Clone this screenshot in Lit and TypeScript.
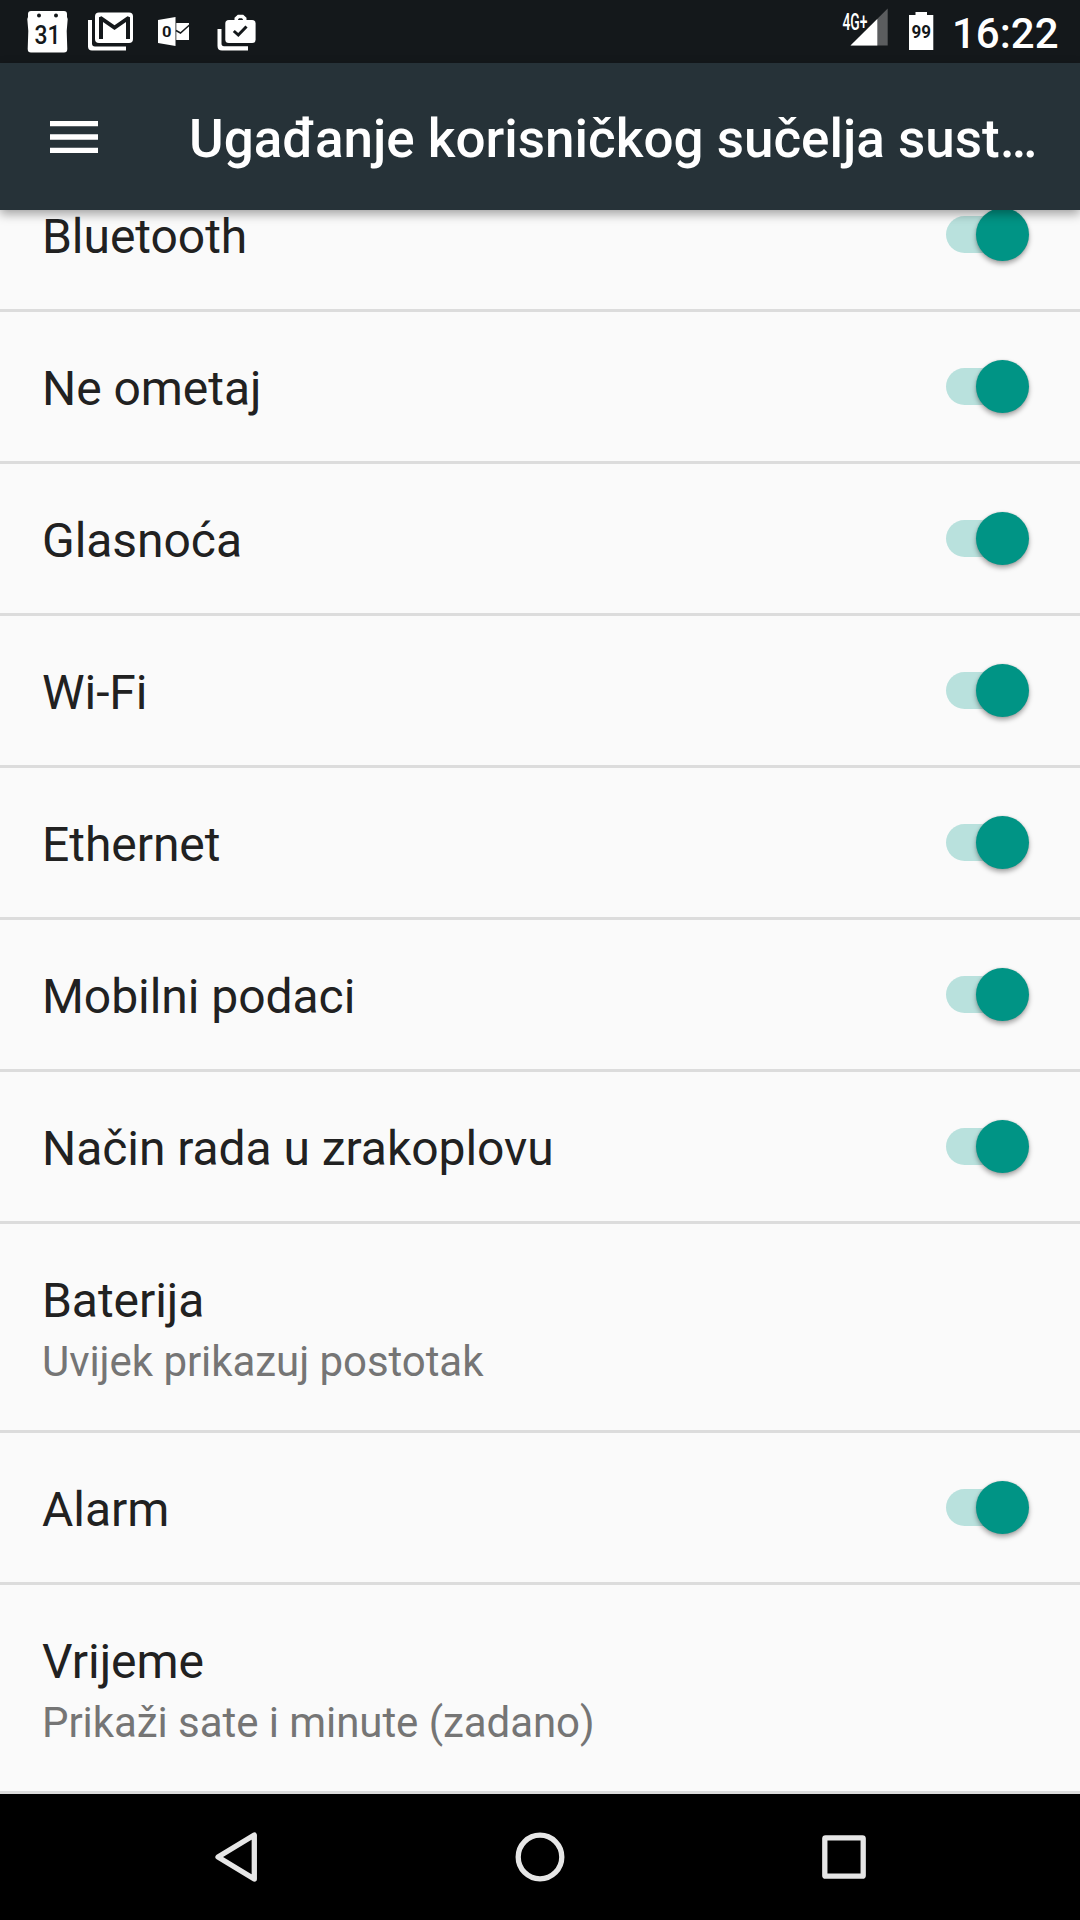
import { LitElement, html, svg, css, nothing } from "lit";
import { customElement, property } from "lit/decorators.js";

interface Setting {
  title: string;
  summary?: string;
  toggle?: boolean;
}

const SETTINGS: Setting[] = [
  { title: "Bluetooth", toggle: true },
  { title: "Ne ometaj", toggle: true },
  { title: "Glasnoća", toggle: true },
  { title: "Wi-Fi", toggle: true },
  { title: "Ethernet", toggle: true },
  { title: "Mobilni podaci", toggle: true },
  { title: "Način rada u zrakoplovu", toggle: true },
  { title: "Baterija", summary: "Uvijek prikazuj postotak" },
  { title: "Alarm", toggle: true },
  { title: "Vrijeme", summary: "Prikaži sate i minute (zadano)" },
];

@customElement("status-bar")
export class StatusBar extends LitElement {
  static styles = css`
    :host {
      display: flex;
      justify-content: space-between;
      height: 63px;
      background: #14181b;
      color: #fff;
    }
    .icons {
      display: block;
      flex: none;
    }
    .right {
      display: flex;
    }
    .clock {
      width: 128px;
      font-size: 42px;
      line-height: 68px;
      font-weight: 500;
      white-space: nowrap;
    }
    .day {
      font: 500 25.5px Roboto, sans-serif;
      fill: #14181b;
    }
    .net {
      font: 500 23px Roboto, sans-serif;
      fill: #fff;
    }
    .level {
      font: 700 18px Roboto, sans-serif;
      fill: #14181b;
    }
    .outlook {
      font: 700 15px Roboto, sans-serif;
      fill: #14181b;
    }
  `;

  render() {
    return html`
      <svg class="icons" width="280" height="63" viewBox="0 0 280 63">
        ${svg`
        <path fill="#fff" d="M31 11H64Q67 11 67 14V17L67.7 19L66.7 31L67.3 49Q67.300 52.500 64 52.500H31Q27.700 52.500 27.700 49L28.300 31L27.300 19L28 17V14Q28 11 31 11Z"/>
        <circle cx="39" cy="15.500" r="2" fill="#14181b"/>
        <circle cx="56" cy="15.500" r="2" fill="#14181b"/>
        <text class="day" x="34.600" y="44" textLength="26" lengthAdjust="spacingAndGlyphs">31</text>
        <path fill="#fff" d="M88 20H92V43.500Q92 46.500 95 46.500H126V50.500H92Q88 50.500 88 46.500Z"/>
        <rect x="95" y="12.500" width="38" height="30.500" rx="4" fill="#fff"/>
        <path fill="#14181b" d="M99 39V17.300L101.500 16.300L114.500 25.300L127.500 16.300L130 17.300V39H126V22L114.500 30L103 22V39Z"/>
        <path fill="#fff" d="M158 20L175.500 17V46L158 43Z"/>
        <text class="outlook" x="166.800" y="37" text-anchor="middle" textLength="9.500" lengthAdjust="spacingAndGlyphs">0</text>
        <rect x="176.300" y="23" width="12.700" height="17" fill="#fff"/>
        <path fill="none" stroke="#14181b" stroke-width="1.500" d="M176 30.500L180.500 33L189.500 25"/>
        <path fill="#fff" d="M217.500 29H221.500V43.500Q221.500 46.300 224 46.300H248V50.500H222Q217.500 50.500 217.500 46Z"/>
        <rect x="225.300" y="20" width="30.300" height="23" rx="3.500" fill="#fff"/>
        <path fill="none" stroke="#fff" stroke-width="3.600" d="M236.300 21V18.500L238.500 16.500H242.500L244.700 18.500V21"/>
        <path fill="none" stroke="#14181b" stroke-width="3" d="M233.800 31L238.300 35L246.500 26.500"/>
        `}
      </svg>
      <div class="right">
        <svg class="icons" width="132" height="63" viewBox="820 0 132 63">
          ${svg`
          <path fill="#5b5d5f" d="M887.700 8.500V45.500H850.500Z"/>
          <path fill="#fff" d="M877.300 19V45.500H850.500Z"/>
          <text class="net" x="842.500" y="29.900" textLength="25" lengthAdjust="spacingAndGlyphs">4G+</text>
          <path fill="#fff" d="M915.500 12H927V15H933.300V50H909V15H915.500Z"/>
          <text class="level" x="921.300" y="37.800" text-anchor="middle" textLength="19.500" lengthAdjust="spacingAndGlyphs">99</text>
          `}
        </svg>
        <div class="clock">16:22</div>
      </div>
    `;
  }
}

@customElement("app-bar")
export class AppBar extends LitElement {
  static styles = css`
    :host {
      display: flex;
      align-items: center;
      height: 147px;
      box-sizing: border-box;
      padding-left: 42px;
      background: #263238;
      color: #fff;
      box-shadow: 0 4px 10px rgba(0, 0, 0, 0.36);
      position: relative;
      z-index: 1;
    }
    .menu {
      display: block;
      flex: none;
    }
    .title {
      margin-left: 83px;
      padding-top: 4px;
      font-size: 53px;
      font-weight: 500;
      line-height: 64px;
      white-space: nowrap;
    }
  `;

  render() {
    return html`
      <svg class="menu" width="64" height="64" viewBox="0 0 24 24">
        <path fill="#fff" d="M3 18h18v-2H3v2zm0-5h18v-2H3v2zm0-7v2h18V6H3z" />
      </svg>
      <div class="title">Ugađanje korisničkog sučelja sust…</div>
    `;
  }
}

@customElement("toggle-switch")
export class ToggleSwitch extends LitElement {
  static styles = css`
    :host {
      display: flex;
      align-items: center;
      justify-content: flex-end;
      width: 74px;
      height: 37px;
      border-radius: 18.5px;
      background: #b9e1dd;
      margin-right: 60px;
    }
    .thumb {
      flex: none;
      width: 53px;
      height: 53px;
      margin-right: -9px;
      border-radius: 50%;
      background: #009485;
      box-shadow: 0 3px 5px rgba(0, 0, 0, 0.34), 0 0 2px rgba(0, 0, 0, 0.15);
    }
  `;

  render() {
    return html`<div class="thumb"></div>`;
  }
}

@customElement("setting-row")
export class SettingRow extends LitElement {
  @property({ attribute: false }) setting!: Setting;

  static styles = css`
    :host {
      display: flex;
      align-items: center;
      justify-content: space-between;
      box-sizing: border-box;
      border-bottom: 3px solid #dcdcdc;
      padding-left: 42px;
    }
    .text {
      padding: 50px 0 45px;
    }
    .title {
      font-size: 48px;
      line-height: 54px;
      letter-spacing: -0.05px;
      color: #212121;
    }
    .summary {
      font-size: 42px;
      line-height: 47px;
      letter-spacing: -0.06px;
      padding-top: 10px;
      color: #757575;
    }
  `;

  render() {
    const { title, summary, toggle } = this.setting;
    return html`
      <div class="text">
        <div class="title">${title}</div>
        ${summary ? html`<div class="summary">${summary}</div>` : nothing}
      </div>
      ${toggle ? html`<toggle-switch></toggle-switch>` : nothing}
    `;
  }
}

@customElement("nav-bar")
export class NavBar extends LitElement {
  static styles = css`
    :host {
      display: flex;
      align-items: center;
      justify-content: center;
      gap: 224px;
      height: 126px;
      background: #000;
    }
    .key {
      display: block;
      flex: none;
    }
  `;

  render() {
    const shapes = [
      svg`<path d="M22 40L58.300 18V62Z"/>`,
      svg`<circle cx="40" cy="40" r="21.800"/>`,
      svg`<rect x="20.800" y="20.800" width="38.400" height="38.400" rx="0.800"/>`,
    ];
    return shapes.map(
      (shape) => html`
        <svg class="key" width="80" height="80" viewBox="0 0 80 80" fill="none"
          stroke="#e6e6e6" stroke-width="5.300" stroke-linejoin="round">${shape}</svg>
      `
    );
  }
}

@customElement("app-root")
export class AppRoot extends LitElement {
  static styles = css`
    :host {
      display: flex;
      flex-direction: column;
      width: 1080px;
      height: 1920px;
      overflow: hidden;
      background: #fafafa;
      font-family: Roboto, "Noto Sans", sans-serif;
    }
    .list {
      flex: 1;
      min-height: 0;
      overflow: hidden;
      display: flex;
      flex-direction: column;
      justify-content: flex-end;
    }
    .row {
      flex: none;
    }
  `;

  render() {
    return html`
      <status-bar></status-bar>
      <app-bar></app-bar>
      <div class="list">
        ${SETTINGS.map((s) => html`<setting-row class="row" .setting=${s}></setting-row>`)}
      </div>
      <nav-bar></nav-bar>
    `;
  }
}
